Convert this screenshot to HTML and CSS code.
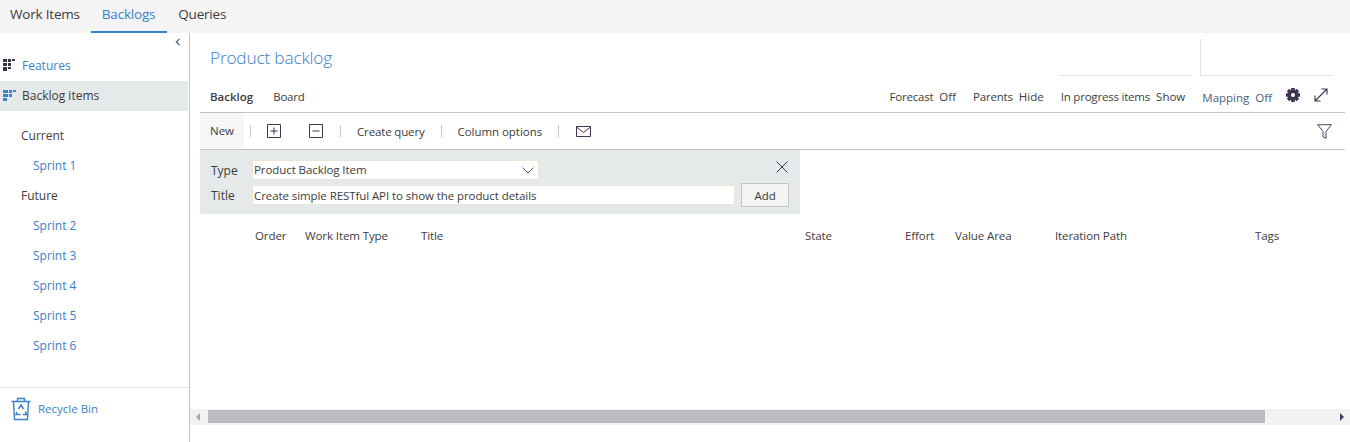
FILE: index.html
```html
<!DOCTYPE html>
<html>
<head>
  <link rel="stylesheet" href="styles.css">
</head>
<body>
  <div class="top-bar">
    <a class="top-tab">Work Items</a>
    <a class="top-tab active">Backlogs</a>
    <a class="top-tab">Queries</a>
  </div>

  <div class="page">
    <div class="sidebar">
      <div class="collapse-row">
        <svg width="6" height="8" viewBox="0 0 6 8"><path d="M4.5 .8 1.3 4l3.2 3.2" fill="none" stroke="#3f5f80" stroke-width="1.2"/></svg>
      </div>
      <div class="nav-row link">
        <svg class="nav-icon" width="13" height="13" viewBox="0 0 13 13" fill="#3b3340">
          <rect x="0" y="0" width="4" height="3"/><rect x="5" y="0" width="3" height="3"/><rect x="9" y="0" width="3" height="2"/>
          <rect x="0" y="4" width="4" height="3"/><rect x="5" y="4" width="3" height="3"/>
          <rect x="0" y="8" width="4" height="4"/><rect x="5" y="8" width="3" height="2"/>
        </svg>
        Features
      </div>
      <div class="nav-row selected">
        <svg class="nav-icon" width="13" height="13" viewBox="0 0 13 13" fill="#3a80d2">
          <rect x="0" y="1" width="5" height="3"/><rect x="6" y="1" width="3" height="3"/><rect x="10" y="1" width="3" height="2"/>
          <rect x="0" y="5" width="5" height="3"/><rect x="6" y="5" width="3" height="3"/>
          <rect x="0" y="9" width="4" height="3"/>
        </svg>
        Backlog items
      </div>
      <div class="iterations">
        <div class="group">Current</div>
        <div class="sprint">Sprint 1</div>
        <div class="group">Future</div>
        <div class="sprint">Sprint 2</div>
        <div class="sprint">Sprint 3</div>
        <div class="sprint">Sprint 4</div>
        <div class="sprint">Sprint 5</div>
        <div class="sprint">Sprint 6</div>
      </div>
      <div class="recycle">
        <svg width="20" height="25" viewBox="0 0 20 25" fill="none" stroke="#3a7fc8">
          <path d="M.5 5.5h19M2.5 5.5l1 18h13l1-18M6.5 5V2.5h7V5" stroke-width="1.4"/>
          <path d="M7.5 13l2.5-4 2.5 4M6 16l-1 2.5h4.5M14.5 15.5l.8 3h-3.5" stroke-width="1.5"/>
        </svg>
        <span>Recycle Bin</span>
      </div>
    </div>

    <div class="main">
      <div class="title-row">
        <h1>Product backlog</h1>
        <div class="chart-box"></div>
        <div class="chart-box framed"></div>
      </div>

      <div class="pivot-row">
        <span class="pivot current">Backlog</span>
        <span class="pivot">Board</span>
        <div class="view-options">
          <span class="opt">Forecast<i>Off</i></span>
          <span class="opt">Parents<i>Hide</i></span>
          <span class="opt">In progress items<i>Show</i></span>
          <span class="opt mapping">Mapping<i>Off</i></span>
          <svg class="gear" width="16" height="16" viewBox="0 0 16 16">
            <g fill="#3f3350">
              <rect x="6.2" y="1" width="3.6" height="14"/>
              <rect x="6.2" y="1" width="3.6" height="14" transform="rotate(45 8 8)"/>
              <rect x="6.2" y="1" width="3.6" height="14" transform="rotate(90 8 8)"/>
              <rect x="6.2" y="1" width="3.6" height="14" transform="rotate(135 8 8)"/>
            </g>
            <circle cx="8" cy="8" r="4" fill="none" stroke="#3f3350" stroke-width="2.6"/>
            <circle cx="8" cy="8" r="2" fill="#fff"/>
          </svg>
          <svg class="expand" width="14" height="14" viewBox="0 0 14 14" fill="none" stroke="#3f3350" stroke-width="1.1">
            <path d="M1 13 13 1M7.5 1H13v5.5M1 7.5V13h5.5"/>
          </svg>
        </div>
      </div>

      <div class="toolbar">
        <span class="tool new">New</span>
        <span class="sep"></span>
        <svg class="box-icon" width="14" height="14" viewBox="0 0 14 14" fill="none" stroke="#3f3350"><path d="M.5.5h13v13H.5zM3.5 7h7M7 3.5v7"/></svg>
        <svg class="box-icon" width="14" height="14" viewBox="0 0 14 14" fill="none" stroke="#3f3350"><path d="M.5.5h13v13H.5zM3.5 7h7"/></svg>
        <span class="sep wide"></span>
        <span class="tool tight">Create query</span>
        <span class="sep"></span>
        <span class="tool">Column options</span>
        <span class="sep"></span>
        <svg class="mail-icon" width="15" height="11" viewBox="0 0 15 11" fill="none" stroke="#3f3350"><path d="M.5.5h14v10H.5zM.5 1l7 5.5 7-5.5"/></svg>
        <svg class="filter-icon" width="15" height="15" viewBox="0 0 15 15" fill="none" stroke="#3f4a66"><path d="M.7.7h13.6L9 7.5v6.8L6 12.8V7.5z"/></svg>
      </div>

      <div class="add-panel">
        <div class="add-row">
          <label>Type</label>
          <div class="field select">
            Product Backlog Item
            <svg width="12" height="7" viewBox="0 0 12 7" fill="none" stroke="#55506a"><path d="M.5.7 6 6 11.5.7"/></svg>
          </div>
          <svg class="close-icon" width="12" height="12" viewBox="0 0 12 12" fill="none" stroke="#3f3350"><path d="M.5.5l11 11M11.5.5l-11 11"/></svg>
        </div>
        <div class="add-row">
          <label class="title-label">Title</label>
          <div class="field title-field">Create simple RESTful API to show the product details</div>
          <button class="add-btn">Add</button>
        </div>
      </div>

      <div class="grid-head">
        <span>Order</span>
        <span>Work Item Type</span>
        <span>Title</span>
        <span>State</span>
        <span>Effort</span>
        <span>Value Area</span>
        <span>Iteration Path</span>
        <span>Tags</span>
      </div>

      <div class="scrollbar">
        <span class="arrow left"></span>
        <div class="track"><div class="thumb"></div></div>
        <span class="arrow right"></span>
      </div>
    </div>
  </div>
</body>
</html>
```

FILE: styles.css
```css
html, body {
  height: 100%;
}
body {
  margin: 0;
  font-family: 'Open Sans', 'Noto Sans', sans-serif;
  font-size: 12px;
  color: #3c3c3c;
  background: #ffffff;
  overflow: hidden;
  display: flex;
  flex-direction: column;
}
.top-bar {
  height: 33px;
  flex: none;
  display: flex;
  background: #f4f4f4;
  box-sizing: border-box;
}
.top-tab {
  padding: 0 11px;
  line-height: 29px;
  font-size: 13.5px;
  letter-spacing: -0.2px;
  color: #3c3c3c;
}
.top-tab:first-child {
  padding-left: 10px;
}
.top-tab.active {
  color: #3a7fc8;
  border-bottom: 2px solid #3a80d2;
  height: 31px;
  padding-right: 12px;
}
.page {
  flex: 1;
  display: flex;
  min-height: 0;
}

/* left nav */
.sidebar {
  width: 190px;
  flex: none;
  box-sizing: border-box;
  border-right: 1px solid #c4c4c4;
  display: flex;
  flex-direction: column;
}
.collapse-row {
  height: 17px;
  display: flex;
  justify-content: flex-end;
  align-items: center;
  padding-right: 8px;
}
.nav-row {
  display: flex;
  align-items: center;
  padding-left: 3px;
}
.nav-row.link {
  height: 31px;
  padding-bottom: 1px;
  box-sizing: border-box;
  color: #3a7fc8;
}
.nav-row.selected {
  height: 30px;
  padding-bottom: 2px;
  box-sizing: border-box;
  background: #e6e9ea;
  color: #3c3c3c;
  margin-right: 1px;
}
.nav-icon {
  margin-right: 6px;
}
.iterations {
  padding-top: 10px;
  flex: 1;
}
.group, .sprint {
  height: 30px;
  line-height: 30px;
  padding-left: 21px;
}
.sprint {
  padding-left: 33px;
  color: #3a7fc8;
}
.recycle {
  height: 55px;
  box-sizing: border-box;
  border-top: 1px solid #e4e4e4;
  display: flex;
  align-items: flex-start;
  padding: 8px 0 0 11px;
  color: #3a7fc8;
}
.recycle span {
  margin: 5px 0 0 7px;
  font-size: 11.5px;
}

/* content */
.main {
  flex: 1;
  min-width: 0;
  display: flex;
  flex-direction: column;
}
.title-row {
  height: 44px;
  display: flex;
  align-items: flex-start;
  padding: 0 18px 0 20px;
}
h1 {
  margin: 13px auto 0 0;
  font-size: 17.3px;
  font-weight: 300;
  color: #3a7fc8;
  letter-spacing: -0.2px;
}
.chart-box {
  width: 132px;
  height: 37px;
  margin: 6px 0 0 9px;
  box-sizing: border-box;
  border-bottom: 1px solid #e6e2dc;
}
.chart-box.framed {
  border-left: 1px solid #e6dfd2;
}
.pivot-row {
  height: 36px;
  margin: 0 5px 0 10px;
  padding: 4px 10px 0;
  display: flex;
  align-items: center;
  box-sizing: border-box;
  border-bottom: 1px solid #c4c4c4;
}
.pivot {
  font-size: 11.5px;
  letter-spacing: -0.2px;
  margin-right: 20px;
}
.pivot.current {
  font-weight: 600;
  letter-spacing: 0;
}
.view-options {
  margin-left: auto;
  display: flex;
  align-items: center;
  font-size: 11.5px;
  letter-spacing: -0.2px;
  padding-right: 7px;
}
.opt {
  margin-right: 17px;
}
.opt i {
  font-style: normal;
  letter-spacing: 0;
  margin-left: 6px;
}
.opt.mapping {
  color: #47627c;
  letter-spacing: 0;
  margin-right: 13px;
  padding-top: 2px;
}
.gear {
  margin-top: -3px;
}
.expand {
  margin-left: 13px;
  margin-top: -3px;
}
.toolbar {
  height: 37px;
  margin: 0 5px 0 10px;
  display: flex;
  align-items: center;
  box-sizing: border-box;
  border-bottom: 1px solid #c4c4c4;
}
.tool {
  font-size: 11.5px;
  letter-spacing: -0.05px;
  white-space: nowrap;
}
.tool.tight {
  letter-spacing: -0.15px;
}
.tool.new {
  align-self: stretch;
  line-height: 36px;
  width: 44px;
  box-sizing: border-box;
  padding-left: 10px;
  letter-spacing: 0;
  background: #f6f6f6;
}
.sep {
  width: 1px;
  height: 12px;
  background: #c8c8c8;
  margin: 0 16px;
}
.sep.wide {
  margin-left: 17px;
}
.tool.new + .sep {
  margin: 0 16px 0 6px;
}
.box-icon + .box-icon {
  margin-left: 28px;
}
.mail-icon {
  margin-left: 1px;
}
.filter-icon {
  margin-left: auto;
  margin-right: 13px;
}
.add-panel {
  width: 600px;
  margin-left: 10px;
  height: 64px;
  box-sizing: border-box;
  background: #e6e9ea;
  padding: 10px 11px 0;
}
.add-row {
  display: flex;
  align-items: center;
  height: 20px;
  margin-bottom: 5px;
}
.add-row label {
  width: 41px;
  flex: none;
}
.add-row .title-label {
  padding-top: 1px;
}
.field {
  height: 20px;
  line-height: 20px;
  box-sizing: border-box;
  padding-left: 1px;
  background: #ffffff;
  border: 1px solid #eae3d6;
  font-size: 11.5px;
  letter-spacing: -0.08px;
  white-space: nowrap;
}
.field.select {
  width: 287px;
  display: flex;
  align-items: center;
  justify-content: space-between;
  padding-right: 4px;
  line-height: 18px;
}
.field.title-field {
  width: 484px;
  line-height: 20px;
}
.close-icon {
  margin-left: auto;
  margin-right: 1px;
  margin-top: -6px;
}
.add-btn {
  margin-left: 6px;
  width: 48px;
  height: 24px;
  padding: 0;
  font: inherit;
  font-size: 11.5px;
  color: #3c3c3c;
  background: #f4f4f4;
  border: 1px solid #c4c4c4;
}
.grid-head {
  display: grid;
  grid-template-columns: 50px 116px 384px 100px 50px 100px 200px 1fr;
  padding: 13px 0 0 65px;
  font-size: 11.5px;
  letter-spacing: -0.1px;
  line-height: 18px;
}
.scrollbar {
  margin-top: auto;
  margin-bottom: 17px;
  height: 16px;
  display: flex;
  align-items: center;
  background: #f2f2f2;
}
.track {
  flex: 1;
  height: 13px;
  margin: 0 17px 1px 0;
}
.thumb {
  width: 1057px;
  height: 100%;
  margin-left: 0;
  background: #bcbdc1;
}
.arrow {
  width: 0;
  height: 0;
  border-top: 4px solid transparent;
  border-bottom: 4px solid transparent;
}
.arrow.left {
  border-right: 4px solid #a9a9a9;
  margin: 0 8px 0 6px;
}
.arrow.right {
  border-left: 4px solid #4c3a66;
  margin-right: 6px;
}
```
